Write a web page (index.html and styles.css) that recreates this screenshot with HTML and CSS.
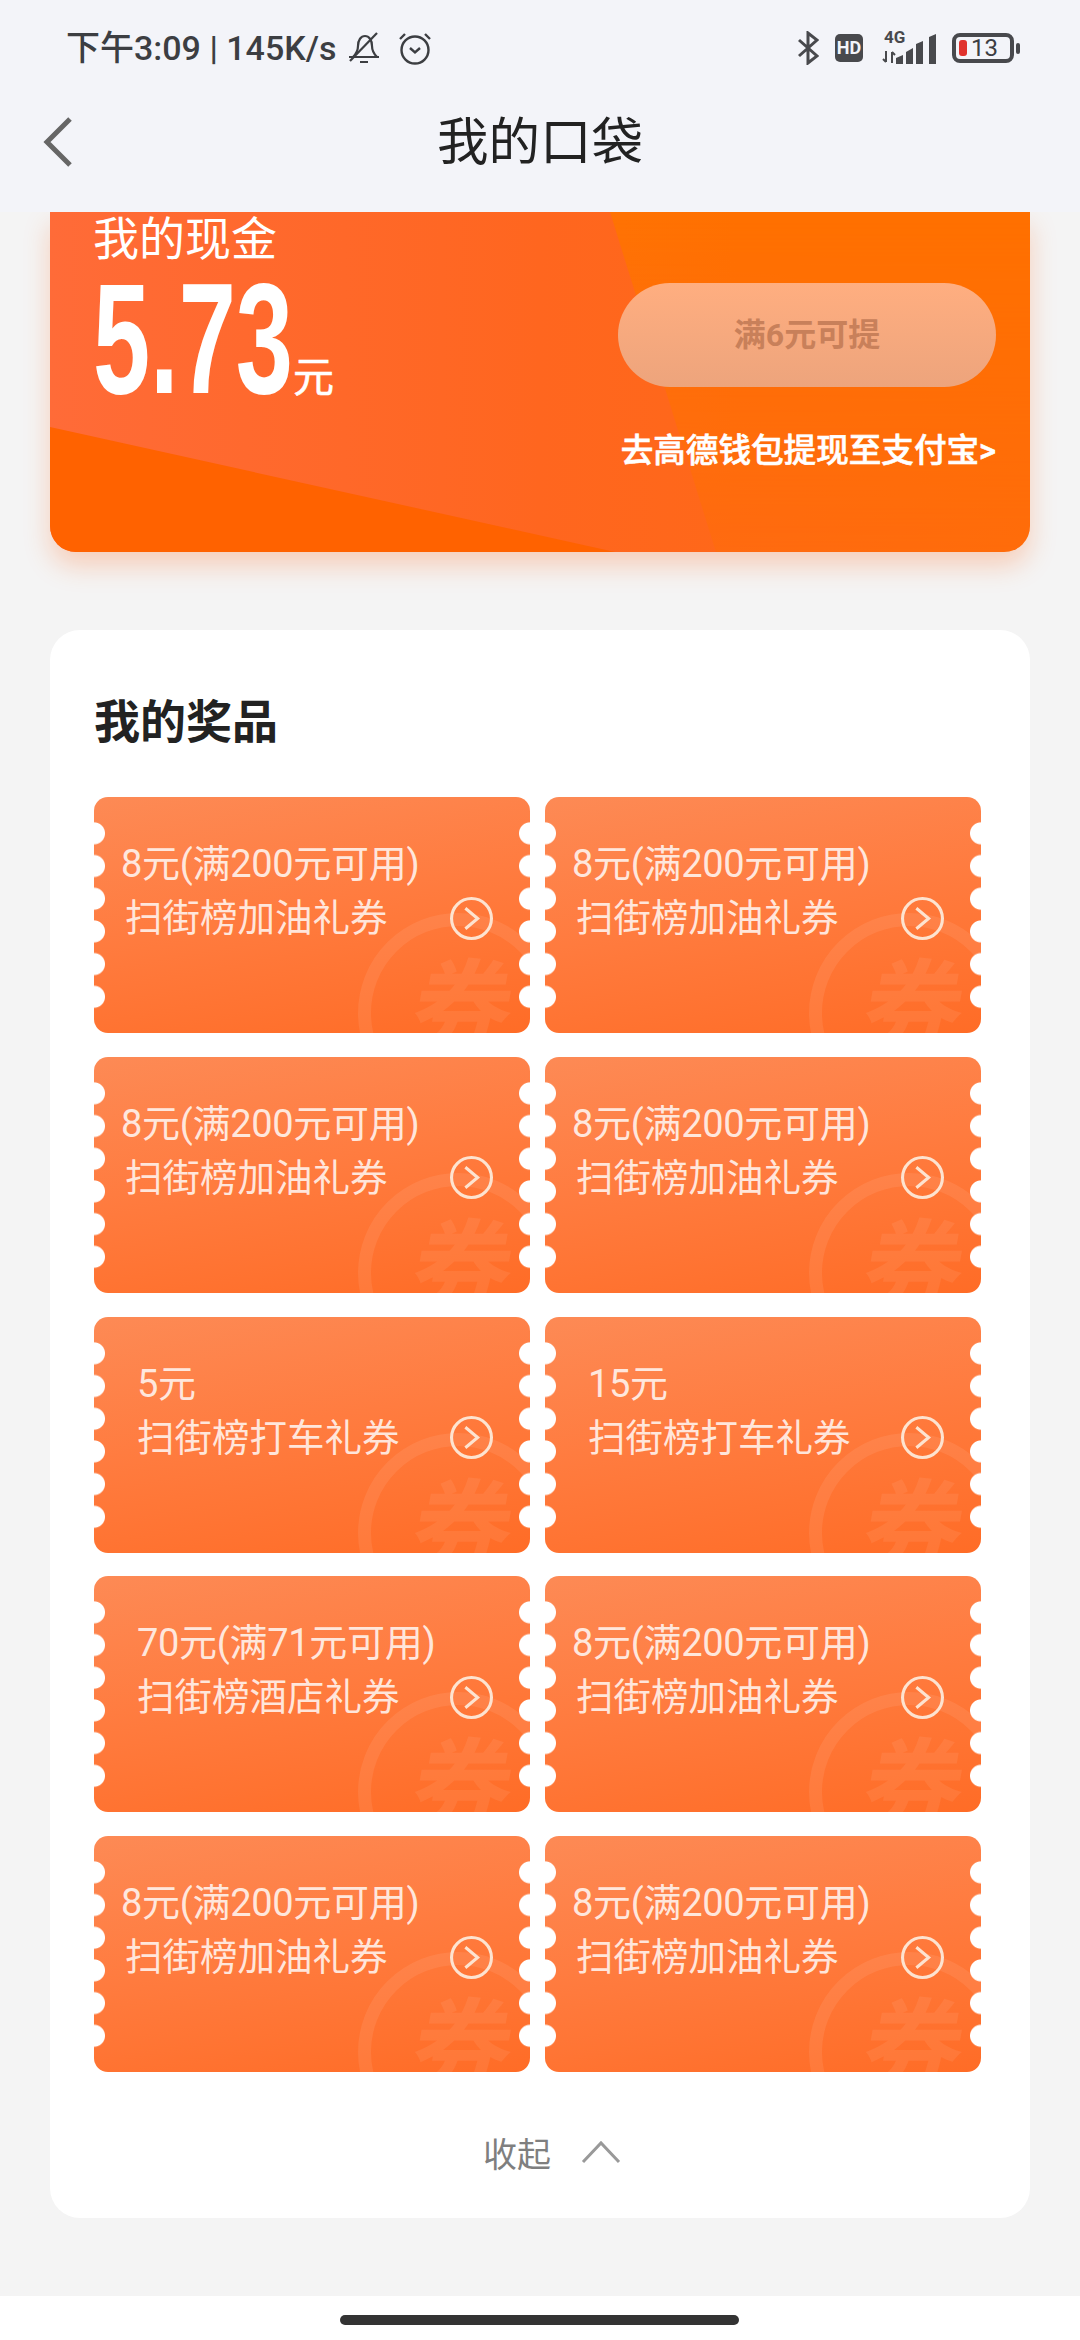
FILE: index.html
```html
<!DOCTYPE html>
<html lang="zh-CN">
<head>
<meta charset="UTF-8">
<meta name="viewport" content="width=device-width, initial-scale=1.0">
<title>我的口袋</title>
<link rel="stylesheet" href="styles.css">
</head>
<body>

<svg class="sprite" aria-hidden="true">
  <symbol id="go" viewBox="0 0 42 42">
    <circle cx="21" cy="21" r="19.5" fill="none" stroke="currentColor" stroke-width="3"/>
    <path d="M15 11 27 21 15 31" fill="none" stroke="currentColor" stroke-width="3"/>
  </symbol>
</svg>

<header class="top">
  <div class="status">
    <div class="status-left">
      <span class="status-text">下午3:09 | 145K/s</span>
      <!-- bell off -->
      <svg class="ico-bell" width="34" height="34" viewBox="0 0 34 34" fill="none" stroke="#3c3e42" stroke-width="2.2">
        <path d="M2 26h30M6 26c3-3 5-6 5-11 0-6 3-10 7-10s7 4 7 10c0 5 2 8 5 11M13 31h8"/>
        <path d="M3 30 30 2"/>
      </svg>
      <!-- alarm -->
      <svg class="ico-alarm" width="34" height="34" viewBox="0 0 34 34" fill="none" stroke="#3c3e42" stroke-width="2.4">
        <circle cx="17" cy="19" r="13.5"/>
        <path d="M12 17l5 4.5 5-4.5M2 8l5-5M32 8l-5-5"/>
      </svg>
    </div>
    <div class="status-right">
      <svg width="22" height="34" viewBox="0 0 22 34" fill="none" stroke="#48494d" stroke-width="3">
        <path d="M2 9l18 16-9 7V2l9 7L2 25"/>
      </svg>
      <span class="hd">HD</span>
      <span class="net">
        <span class="net-type">4G</span>
        <svg class="net-arrows" width="14" height="14" viewBox="0 0 14 14" fill="none" stroke="#48494d" stroke-width="2">
          <path d="M4 1v11M1 9l3 3M10 13V2M13 5l-3-3"/>
        </svg>
        <svg width="41" height="30" viewBox="0 0 41 30" fill="#48494d">
          <path d="M0 24 7 21v9H0zM10 18l7-4v16h-7zM20 10l7-3v23h-7zM33 3l7-3v30h-7z"/>
        </svg>
      </span>
      <span class="battery">
        <span class="battery-body"><i class="battery-fill"></i>13</span>
        <i class="battery-nub"></i>
      </span>
    </div>
  </div>
  <div class="titlebar">
    <svg class="back" width="32" height="52" viewBox="0 0 32 52" fill="none" stroke="#666" stroke-width="5">
      <path d="M28 3 5 26l23 23"/>
    </svg>
    <h1>我的口袋</h1>
  </div>
</header>

<main class="page">
  <section class="cash">
    <div class="cash-left">
      <div class="cash-label">我的现金</div>
      <div class="cash-amount"><span class="cash-num">5.73</span><span class="cash-unit">元</span></div>
    </div>
    <div class="cash-right">
      <div class="cash-btn">满6元可提</div>
      <div class="cash-link">去高德钱包提现至支付宝&gt;</div>
    </div>
  </section>

  <section class="prizes">
    <h2>我的奖品</h2>
    <div class="ticket-grid">
      <div class="ticket ticket-long">
        <div class="ticket-value">8元(满200元可用)</div>
        <div class="ticket-row"><span class="ticket-name">扫街榜加油礼券</span><svg class="ticket-go"><use href="#go"/></svg></div>
        <span class="ticket-ring"></span><span class="ticket-mark">券</span>
      </div>
      <div class="ticket ticket-long">
        <div class="ticket-value">8元(满200元可用)</div>
        <div class="ticket-row"><span class="ticket-name">扫街榜加油礼券</span><svg class="ticket-go"><use href="#go"/></svg></div>
        <span class="ticket-ring"></span><span class="ticket-mark">券</span>
      </div>
      <div class="ticket ticket-long">
        <div class="ticket-value">8元(满200元可用)</div>
        <div class="ticket-row"><span class="ticket-name">扫街榜加油礼券</span><svg class="ticket-go"><use href="#go"/></svg></div>
        <span class="ticket-ring"></span><span class="ticket-mark">券</span>
      </div>
      <div class="ticket ticket-long">
        <div class="ticket-value">8元(满200元可用)</div>
        <div class="ticket-row"><span class="ticket-name">扫街榜加油礼券</span><svg class="ticket-go"><use href="#go"/></svg></div>
        <span class="ticket-ring"></span><span class="ticket-mark">券</span>
      </div>
      <div class="ticket">
        <div class="ticket-value">5元</div>
        <div class="ticket-row"><span class="ticket-name">扫街榜打车礼券</span><svg class="ticket-go"><use href="#go"/></svg></div>
        <span class="ticket-ring"></span><span class="ticket-mark">券</span>
      </div>
      <div class="ticket">
        <div class="ticket-value">15元</div>
        <div class="ticket-row"><span class="ticket-name">扫街榜打车礼券</span><svg class="ticket-go"><use href="#go"/></svg></div>
        <span class="ticket-ring"></span><span class="ticket-mark">券</span>
      </div>
      <div class="ticket">
        <div class="ticket-value">70元(满71元可用)</div>
        <div class="ticket-row"><span class="ticket-name">扫街榜酒店礼券</span><svg class="ticket-go"><use href="#go"/></svg></div>
        <span class="ticket-ring"></span><span class="ticket-mark">券</span>
      </div>
      <div class="ticket ticket-long">
        <div class="ticket-value">8元(满200元可用)</div>
        <div class="ticket-row"><span class="ticket-name">扫街榜加油礼券</span><svg class="ticket-go"><use href="#go"/></svg></div>
        <span class="ticket-ring"></span><span class="ticket-mark">券</span>
      </div>
      <div class="ticket ticket-long">
        <div class="ticket-value">8元(满200元可用)</div>
        <div class="ticket-row"><span class="ticket-name">扫街榜加油礼券</span><svg class="ticket-go"><use href="#go"/></svg></div>
        <span class="ticket-ring"></span><span class="ticket-mark">券</span>
      </div>
      <div class="ticket ticket-long">
        <div class="ticket-value">8元(满200元可用)</div>
        <div class="ticket-row"><span class="ticket-name">扫街榜加油礼券</span><svg class="ticket-go"><use href="#go"/></svg></div>
        <span class="ticket-ring"></span><span class="ticket-mark">券</span>
      </div>
    </div>
    <div class="collapse">
      <span>收起</span>
      <svg width="40" height="24" viewBox="0 0 40 24" fill="none" stroke="#999" stroke-width="3">
        <path d="M2 22 20 3l18 19"/>
      </svg>
    </div>
  </section>
</main>

<footer class="navbar"><i class="home-bar"></i></footer>

</body>
</html>
```

FILE: styles.css
```css
* {
  box-sizing: border-box;
}
body {
  margin: 0;
  width: 1080px;
  height: 2340px;
  overflow: hidden;
  display: flex;
  flex-direction: column;
  background-color: #f4f4f4;
  font-family: Roboto, "Noto Sans CJK SC", sans-serif;
}
.sprite {
  display: none;
}

/* top area */
.top {
  position: relative;
  z-index: 2;
  height: 212px;
  background-color: #f3f4f9;
  flex-shrink: 0;
}
.status {
  height: 94px;
  padding: 29px 60px 0 66px;
  display: flex;
  justify-content: space-between;
  align-items: flex-start;
}
.status-left {
  display: flex;
  align-items: center;
  height: 38px;
}
.status-text {
  font-size: 34px;
  font-weight: 500;
  color: #3c3e42;
  line-height: 38px;
  white-space: nowrap;
}
.ico-bell {
  margin-left: 10px;
}
.ico-alarm {
  margin-left: 17px;
}
.status-right {
  display: flex;
  align-items: center;
  height: 38px;
}
.hd {
  margin-left: 16px;
  width: 28px;
  height: 28px;
  border-radius: 5px;
  background-color: #48494d;
  color: #f3f4f9;
  font-size: 18px;
  font-weight: 700;
  line-height: 28px;
  text-align: center;
}
.net {
  margin-left: 19px;
  width: 55px;
  height: 32px;
  display: flex;
  align-items: flex-end;
  position: relative;
}
.net-type {
  position: absolute;
  left: 2px;
  top: -4px;
  font-size: 17px;
  font-weight: 700;
  line-height: 18px;
  color: #48494d;
}
.net-arrows {
  position: absolute;
  left: 0;
  bottom: 0;
}
.net svg:last-child {
  margin-left: 14px;
}
.battery {
  margin-left: 15px;
  display: flex;
  align-items: center;
}
.battery-body {
  width: 62px;
  height: 30px;
  border: 4px solid #48494d;
  border-radius: 8px;
  display: flex;
  align-items: center;
  padding-left: 3px;
  font-size: 24px;
  line-height: 22px;
  color: #3c3e42;
}
.battery-fill {
  width: 8px;
  height: 16px;
  border-radius: 3px;
  background-color: #e0322d;
  margin-right: 4px;
}
.battery-nub {
  width: 4px;
  height: 11px;
  margin-left: 2px;
  border-radius: 2px;
  background-color: #48494d;
}
.titlebar {
  position: relative;
  height: 96px;
  padding-top: 2px;
  display: flex;
  align-items: center;
  justify-content: center;
}
.back {
  position: absolute;
  left: 42px;
  top: 22px;
}
h1 {
  margin: 0;
  font-size: 51.5px;
  font-weight: 400;
  color: #222;
  line-height: 94px;
}

/* page */
.page {
  flex: 1;
  padding: 0 50px;
}
.cash {
  position: relative;
  height: 340px;
  display: flex;
  justify-content: space-between;
  padding: 0 34px 0 43px;
  border-radius: 0 0 26px 26px;
  background: linear-gradient(90deg, #ff6b38 0%, #ff661f 50%, #ff6a10 100%);
  box-shadow: 0 14px 26px rgba(255, 110, 40, .28);
  overflow: hidden;
  color: #fff;
}
.cash::before {
  content: "";
  position: absolute;
  inset: 0;
  background-color: #ff6200;
  clip-path: polygon(0 215px, 565px 340px, 0 340px);
}
.cash::after {
  content: "";
  position: absolute;
  inset: 0;
  background: linear-gradient(90deg, #ff7c12, #ff7000 70%);
  clip-path: polygon(560px 0, 981px 0, 981px 340px, 666px 340px);
  -webkit-mask-image: linear-gradient(180deg, #000 0%, rgba(0, 0, 0, .35) 100%);
  mask-image: linear-gradient(180deg, #000 0%, rgba(0, 0, 0, .35) 100%);
}
.cash-left,
.cash-right {
  position: relative;
  z-index: 1;
}
.cash-label {
  font-size: 46px;
  line-height: 50px;
  margin-top: 2px;
}
.cash-amount {
  display: flex;
  align-items: flex-end;
  margin-top: 12px;
}
.cash-num {
  display: inline-block;
  width: 195px;
  font-family: "Liberation Sans Narrow", "Liberation Sans", sans-serif;
  font-size: 158px;
  font-weight: 700;
  line-height: 124px;
  white-space: nowrap;
  transform: scaleX(.65);
  transform-origin: left;
}
.cash-unit {
  margin-left: 5px;
  font-size: 41px;
  line-height: 44px;
  -webkit-text-stroke: .6px #fff;
}
.cash-right {
  width: 380px;
  display: flex;
  flex-direction: column;
  align-items: flex-end;
}
.cash-btn {
  margin-top: 71px;
  width: 378px;
  height: 104px;
  border-radius: 52px;
  background: linear-gradient(180deg, #ffae80, #eda47c);
  color: #c8805a;
  font-size: 32px;
  font-weight: 700;
  line-height: 104px;
  text-align: center;
}
.cash-link {
  margin-top: 40px;
  font-size: 32.6px;
  font-weight: 500;
  line-height: 48px;
  white-space: nowrap;
  -webkit-text-stroke: .6px #fff;
}

/* prizes */
.prizes {
  margin-top: 78px;
  height: 1588px;
  padding: 62px 50px 0 44px;
  background-color: #fff;
  border-radius: 30px;
}
h2 {
  margin: 0 0 45px;
  font-size: 46px;
  font-weight: 700;
  line-height: 60px;
  color: #222;
}
.ticket-grid {
  display: grid;
  grid-template-columns: 436px 436px;
  grid-auto-rows: 236px;
  column-gap: 15px;
  row-gap: 23.75px;
}
.ticket {
  position: relative;
  overflow: hidden;
  padding: 40px 37px 0 43px;
  border-radius: 14px;
  background: linear-gradient(170deg, #fd8a55 0%, #ff7c40 45%, #ff6c26 100%);
  color: rgba(255, 255, 255, .82);
}
/* scalloped edges */
.ticket::before,
.ticket::after {
  content: "";
  position: absolute;
  z-index: 1;
  top: 20px;
  width: 11px;
  height: 196px;
  background-size: 11px 32.7px;
  background-repeat: repeat-y;
}
.ticket::before {
  left: 0;
  background-image: radial-gradient(circle at 0 50%, #fff 10.5px, transparent 11.5px);
}
.ticket::after {
  right: 0;
  background-image: radial-gradient(circle at 100% 50%, #fff 10.5px, transparent 11.5px);
}
.ticket-long {
  padding-left: 27px;
}
.ticket-long .ticket-row {
  padding-left: 4px;
}
.ticket-value {
  font-size: 38px;
  line-height: 54px;
  letter-spacing: -.3px;
  white-space: nowrap;
}
.ticket-row {
  display: flex;
  justify-content: space-between;
  align-items: center;
  height: 54px;
}
.ticket-name {
  font-size: 37.5px;
  line-height: 54px;
  white-space: nowrap;
}
.ticket-go {
  width: 43px;
  height: 43px;
  color: #fde3d0;
  position: relative;
  z-index: 1;
}
.ticket-ring {
  position: absolute;
  left: 264px;
  top: 116px;
  width: 200px;
  height: 200px;
  border: 13px solid rgba(255, 255, 255, .08);
  border-radius: 50%;
}
/* only the top of the mark shows, the card clips the rest */
.ticket-mark {
  position: absolute;
  left: 319px;
  top: 152px;
  font-size: 100px;
  font-weight: 700;
  line-height: 120px;
  color: rgba(255, 255, 255, .07);
  transform: skewX(-10deg);
}
.collapse {
  display: flex;
  justify-content: center;
  align-items: center;
  gap: 30px;
  margin-top: 55px;
  padding-left: 30px;
  height: 50px;
  font-size: 34px;
  color: #7f7f7f;
}

/* bottom bar */
.navbar {
  height: 44px;
  flex-shrink: 0;
  background-color: #fff;
  padding: 19px 0 0 340px;
}
.home-bar {
  display: block;
  width: 399px;
  height: 10px;
  border-radius: 5px;
  background-color: #333;
}
```
